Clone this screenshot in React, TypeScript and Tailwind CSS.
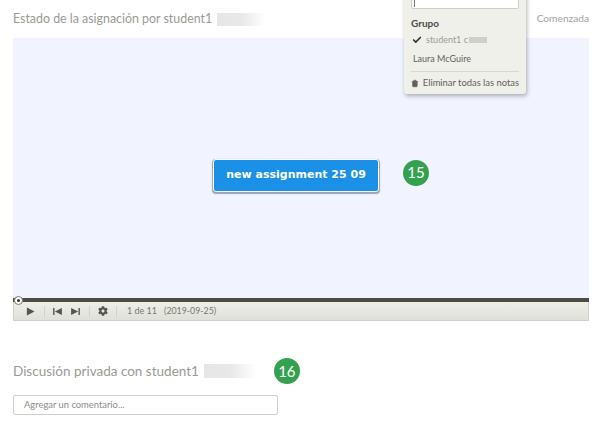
import { Check, Trash2 } from 'lucide-react';
import { FaCog } from 'react-icons/fa';

const font = { fontFamily: 'Lato, sans-serif' };

const Blurred = ({ className }: { className: string }) => (
  <span className={`inline-block bg-gradient-to-r from-[#e6e6e6] via-[#e8e8e8] to-white ${className}`} />
);

const Divider = () => <span className="block w-px h-[11px] bg-[#d2d3cc]" />;

const App = () => {
  return (
    <div className="relative w-[600px] h-[428px] overflow-hidden bg-white pl-[13px] pr-[11px]" style={font}>
      {/* Header */}
      <div className="h-[38px] flex items-center justify-between pt-[1px]">
        <div className="flex items-center gap-[5px] text-[12.4px] text-[#9a9a94]">
          <span>Estado de la asignación por student1</span>
          <Blurred className="w-[48px] h-[13px]" />
        </div>
        <span className="text-[10.2px] text-[#a3a39d] mt-[-1px]">Comenzada</span>
      </div>

      {/* Viewer */}
      <div className="h-[260px] bg-[#f1f4fe] flex items-center pl-[200px] pt-[14px]">
        <div className="w-[166px] h-[33px] rounded-[3px] bg-[#1a91e6] border border-white shadow-[0_1px_1px_1px_#9aa3b5] flex items-center justify-center text-white text-[11px] font-bold" style={{ fontFamily: '"DejaVu Sans", sans-serif' }}>
          new assignment 25 09
        </div>
        <div className="ml-[24px] w-[26px] h-[26px] rounded-full bg-[#34a150] flex items-center justify-center text-white text-[15px] mt-[-5px]">15</div>
      </div>

      {/* Timeline */}
      <div className="relative h-[4px] bg-[#4c4d42]">
        <span className="absolute left-[1px] top-[-2px] w-[9px] h-[9px] rounded-full bg-white border border-[#77786e] flex items-center justify-center">
          <span className="w-[3px] h-[3px] rounded-full bg-[#33342c]" />
        </span>
      </div>
      <div className="h-[19px] bg-gradient-to-b from-[#eeefe9] to-[#dfe0da] border-x border-b border-[#d0d1ca] flex items-center pl-[12px] text-[#54554d]">
        <svg viewBox="0 0 10 10" className="w-[9px] h-[9px] fill-current"><path d="M1 0.5 L9.5 5 L1 9.5 Z" /></svg>
        <span className="ml-[9px]"><Divider /></span>
        <svg viewBox="0 0 10 8" className="ml-[8px] w-[9px] h-[7px] fill-current"><path d="M0 0h1.6v8H0z M10 0v8L2 4z" /></svg>
        <svg viewBox="0 0 10 8" className="ml-[9px] w-[9px] h-[7px] fill-current"><path d="M0 0v8L8 4z M8.4 0H10v8H8.4z" /></svg>
        <span className="ml-[9px]"><Divider /></span>
        <FaCog className="ml-[8px] w-[10px] h-[10px]" />
        <span className="ml-[8px]"><Divider /></span>
        <span className="ml-[10px] text-[9px] text-[#77786f]">1 de 11</span>
        <span className="ml-[7px] text-[8.8px] text-[#77786f]">(2019-09-25)</span>
      </div>

      {/* Private discussion */}
      <div className="mt-[38px] h-[24px] flex items-center text-[#9a9a94] text-[13.5px]">
        <span>Discusión privada con student1</span>
        <Blurred className="ml-[5px] w-[52px] h-[14px]" />
        <div className="ml-[18px] w-[26px] h-[26px] rounded-full bg-[#34a150] flex items-center justify-center text-white text-[15px]">16</div>
      </div>
      <div className="mt-[12px] w-[265px] h-[20px] rounded-[2px] border border-[#cfcfcf] flex items-center pl-[10px] text-[9.4px] text-[#8d8d88]">
        Agregar un comentario...
      </div>

      {/* Popup menu */}
      <div className="absolute left-[404px] top-[-10px] w-[122px] h-[104px] bg-[#f0f0ea] rounded-[3px] shadow-[1px_2px_4px_rgba(0,0,0,0.3)] px-[7px]">
        <div className="h-[19px] bg-white border border-[#cfcfca] rounded-[2px] flex items-center pl-[2px]">
          <span className="w-px h-[8px] mt-[6px] bg-[#777]" />
        </div>
        <div className="mt-[7px] text-[10px] font-bold text-[#4a4a46]">Grupo</div>
        <div className="mt-[2px] h-[14px] flex items-center text-[9px] text-[#9b9b95]">
          <Check className="ml-[1px] w-[10px] h-[10px] text-[#33332f]" strokeWidth={4} />
          <span className="ml-[4px]">student1 c</span>
          <span className="ml-[1px] w-[18px] h-[6px] bg-[#cfcfca]" />
        </div>
        <div className="mt-[5px] pl-[2px] text-[9px] leading-[14px] text-[#5f5f5a]">Laura McGuire</div>
        <div className="mt-[5px] border-t border-[#d8d8d2] pt-[4px] flex items-center text-[9.4px] text-[#5f5f5a] whitespace-nowrap">
          <Trash2 className="w-[8px] h-[9px] text-[#5f5f5a] fill-current" />
          <span className="ml-[4px]">Eliminar todas las notas</span>
        </div>
      </div>
    </div>
  );
};

export default App;
